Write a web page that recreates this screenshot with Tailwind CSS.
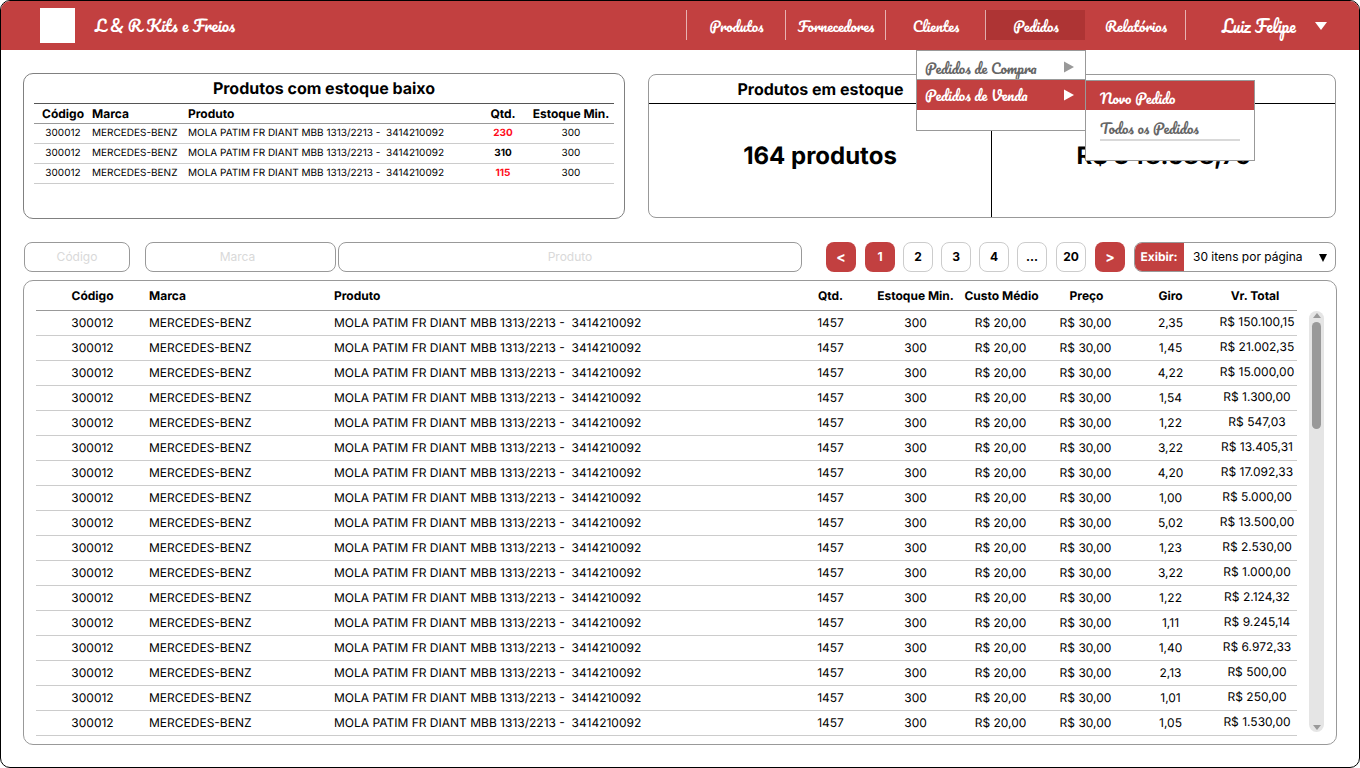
<!DOCTYPE html>
<html lang="pt-BR">
<head>
<meta charset="utf-8">
<meta name="viewport" content="width=device-width, initial-scale=1">
<title>L & R Kits e Freios</title>
<script src="https://cdn.jsdelivr.net/npm/@tailwindcss/browser@4"></script>
</head>
<body class="bg-white font-['Inter',sans-serif] text-xs text-black [text-rendering:geometricPrecision]">
<div class="flex min-h-screen flex-col rounded-[10px] border border-black">
  <header class="flex h-[49px] shrink-0 items-center rounded-t-[9px] bg-[#c24040] pl-[39px] pr-8 font-['Pacifico','Liberation_Serif',cursive] text-white">
    <div class="size-[35px] bg-white"></div>
    <a href="#" class="ml-5 whitespace-nowrap text-base">L &amp; R Kits e Freios</a>
    <nav class="mb-px ml-auto flex h-[30px] text-sm" aria-label="Principal">
      <a href="#" class="flex w-[99px] items-center justify-center border-l border-white/60 pl-px pt-[3px]">Produtos</a>
      <a href="#" class="flex w-[100px] items-center justify-center border-l border-white/60 pl-px pt-[3px]">Fornecedores</a>
      <a href="#" class="flex w-[100px] items-center justify-center border-l border-white/60 pl-px pt-[3px]">Clientes</a>
      <div class="relative w-[100px]">
        <a href="#" class="flex h-full items-center justify-center border-l border-white/60 bg-[#ae3434] pl-px pt-[3px]">Pedidos</a>
        <div class="absolute -right-px top-10 z-10 h-[81px] w-[170px] border border-[#999] bg-white">
          <a href="#" class="flex h-7 items-center justify-between pl-2 pr-[11px] pt-2 text-[#666]">Pedidos de Compra
            <svg class="-mt-1 h-3 w-[10px]" viewBox="0 0 10 12" fill="#999"><path d="M0 0.5 10 6 0 11.5Z"/></svg></a>
          <div class="relative border-t border-[#999]">
            <a href="#" class="flex h-[30px] items-center justify-between bg-[#c24040] pl-2 pr-[11px] pt-[2px]">Pedidos de Venda
              <svg class="-mt-[2px] h-3 w-[10px]" viewBox="0 0 10 12" fill="#fff"><path d="M0 0.5 10 6 0 11.5Z"/></svg></a>
            <div class="absolute left-full top-0 h-[81px] w-[170px] border border-[#999] bg-white">
              <a href="#" class="flex h-[29px] items-center bg-[#c24040] pl-[14px] pt-[6px]">Novo Pedido</a>
              <a href="#" class="mx-[14px] flex h-[31px] items-center border-b-2 border-[#d9d9d9] pt-2 text-[#666]">Todos os Pedidos</a>
            </div>
          </div>
        </div>
      </div>
      <a href="#" class="flex w-[101px] items-center justify-center border-r border-white/60 pl-[2px] pt-[3px]">Relatórios</a>
    </nav>
    <button type="button" class="ml-9 flex w-[105px] items-center justify-between whitespace-nowrap text-base">Luiz Felipe
      <svg class="h-2 w-3" viewBox="0 0 12 8" fill="#fff"><path d="M0 0H12L6 8Z"/></svg></button>
  </header>

  <main class="flex grow flex-col px-[22px] pb-[22px] pt-[23px]">
    <div class="mr-px grid grid-cols-[602fr_688fr] gap-[23px]">
      <section class="h-[146px] rounded-[10px] border border-[#808080] px-[10px]">
        <h2 class="flex h-[30px] items-center justify-center border-b border-[#555] pb-px text-base font-bold">Produtos com estoque baixo</h2>
        <table class="-mt-px w-full table-fixed text-center text-[10px]">
          <colgroup><col class="w-[58px]"><col class="w-24"><col><col class="w-[50px]"><col class="w-[86px]"></colgroup>
          <thead class="text-xs"><tr class="h-5 border-b border-[#999]">
            <th class="pt-[2px] font-bold">Código</th><th class="pt-[2px] text-left font-bold">Marca</th><th class="pt-[2px] text-left font-bold">Produto</th><th class="pt-[2px] font-bold">Qtd.</th><th class="whitespace-nowrap pt-[2px] font-bold">Estoque Min.</th></tr></thead>
          <tbody id="low"></tbody>
        </table>
      </section>
      <section class="mt-px flex h-36 flex-col rounded-lg border border-[#999]">
        <div class="grid h-[29px] grid-cols-2 items-center border-b border-black text-center text-base font-bold">
          <h2>Produtos em estoque</h2></div>
        <div class="grid grow grid-cols-2 text-center text-2xl font-bold">
          <p class="flex items-center justify-center border-r border-black pb-[10px]">164 produtos</p>
          <p class="flex items-center justify-center pb-[10px]">R$ 348.688,75</p>
        </div>
      </section>
    </div>

    <div class="mt-[23px] flex h-[30px] pl-px">
      <input aria-label="Código" placeholder="Código" class="w-[106px] rounded-lg border border-[#999] text-center placeholder:text-[#d9d9d9]">
      <input aria-label="Marca" placeholder="Marca" class="ml-[15px] w-[191px] rounded-lg border border-[#999] pr-[6px] text-center placeholder:text-[#d9d9d9]">
      <input aria-label="Produto" placeholder="Produto" class="ml-[2px] min-w-0 grow rounded-lg border border-[#999] text-center placeholder:text-[#d9d9d9]">
      <nav class="ml-6 flex gap-2 font-bold" aria-label="Paginação">
        <button type="button" class="mr-px w-[30px] rounded-lg bg-[#c24040] text-sm font-bold text-white">&lt;</button>
        <button type="button" class="w-[30px] rounded-lg bg-[#c24040] text-white">1</button>
        <button type="button" class="w-[30px] rounded-lg border border-[#ccc]">2</button>
        <button type="button" class="w-[30px] rounded-lg border border-[#ccc]">3</button>
        <button type="button" class="w-[30px] rounded-lg border border-[#ccc]">4</button>
        <button type="button" class="w-[30px] rounded-lg border border-[#ccc]">...</button>
        <button type="button" class="ml-px w-[30px] rounded-lg border border-[#ccc]">20</button>
        <button type="button" class="ml-px w-[30px] rounded-lg bg-[#c24040] text-sm font-bold text-white">&gt;</button>
      </nav>
      <div class="ml-[9px] mr-px flex w-[202px] overflow-hidden rounded-lg border border-[#999]">
        <label for="size" class="-my-px -ml-px flex w-[50px] items-center justify-center bg-[#c24040] font-bold text-white">Exibir:</label>
        <div class="relative grow">
          <select id="size" class="h-full w-full appearance-none pl-[9px]"><option>30 itens por página</option></select>
          <svg class="pointer-events-none absolute right-2 top-[11px] h-2 w-2" viewBox="0 0 8 8"><path d="M0 0H8L4 8Z"/></svg>
        </div>
      </div>
    </div>

    <section class="mt-2 flex grow rounded-[10px] border border-[#999] pb-2 pl-3 pr-3">
      <table class="table-fixed grow self-start text-center">
        <colgroup><col class="w-[113px]"><col class="w-[185px]"><col><col class="w-[85px]"><col class="w-[85px]"><col class="w-[85px]"><col class="w-[85px]"><col class="w-[85px]"><col class="w-[84px]"></colgroup>
        <thead><tr class="h-[29px] border-b border-[#999] whitespace-nowrap">
          <th class="pt-px font-bold">Código</th><th class="pt-px text-left font-bold">Marca</th><th class="pt-px text-left font-bold">Produto</th><th class="pt-px font-bold">Qtd.</th><th class="pt-px font-bold">Estoque Min.</th><th class="pl-[2px] pt-px font-bold">Custo Médio</th><th class="pl-[2px] pt-px font-bold">Preço</th><th class="pt-px font-bold">Giro</th><th class="pt-px font-bold">Vr. Total</th></tr></thead>
        <tbody id="stock"></tbody>
      </table>
      <div class="mb-1 ml-3 mt-[30px] flex w-[15px] shrink-0 flex-col items-center justify-between rounded-full bg-[#e5e5e5] py-[2px]">
        <div class="flex flex-col items-center gap-1">
          <svg class="h-[5px] w-2" viewBox="0 0 8 5" fill="#999"><path d="M4 0 8 5H0Z"/></svg>
          <div class="h-[107px] w-[9px] rounded-full bg-[#999]"></div>
        </div>
        <svg class="h-[5px] w-2" viewBox="0 0 8 5" fill="#999"><path d="M0 0H8L4 5Z"/></svg>
      </div>
    </section>
  </main>
</div>
<script>
const product = 'MOLA PATIM FR DIANT MBB 1313/2213 -&nbsp; 3414210092';
const low = [[230, 'text-[#ff0c1a]'], [310, 'text-black'], [115, 'text-[#ff0c1a]']];
document.getElementById('low').innerHTML = low.map(([q, c]) =>
  `<tr class="h-5 border-b border-[#ccc] whitespace-nowrap"><td class="pt-[2px]">300012</td><td class="pt-[2px] text-left">MERCEDES-BENZ</td><td class="pt-[2px] text-left">${product}</td><td class="pt-[2px] font-bold ${c}">${q}</td><td class="pt-px">300</td></tr>`).join('');
const stock = [['2,35','150.100,15'],['1,45','21.002,35'],['4,22','15.000,00'],['1,54','1.300,00'],['1,22','547,03'],['3,22','13.405,31'],['4,20','17.092,33'],['1,00','5.000,00'],['5,02','13.500,00'],['1,23','2.530,00'],['3,22','1.000,00'],['1,22','2.124,32'],['1,11','9.245,14'],['1,40','6.972,33'],['2,13','500,00'],['1,01','250,00'],['1,05','1.530,00']];
document.getElementById('stock').innerHTML = stock.map(([g, v]) =>
  `<tr class="h-[25px] border-b border-[#ccc] whitespace-nowrap"><td>300012</td><td class="text-left">MERCEDES-BENZ</td><td class="text-left">${product}</td><td>1457</td><td>300</td><td>R$ 20,00</td><td>R$ 30,00</td><td>${g}</td><td class="pb-[2px] pl-1">R$ ${v}</td></tr>`).join('');
</script>
</body>
</html>
